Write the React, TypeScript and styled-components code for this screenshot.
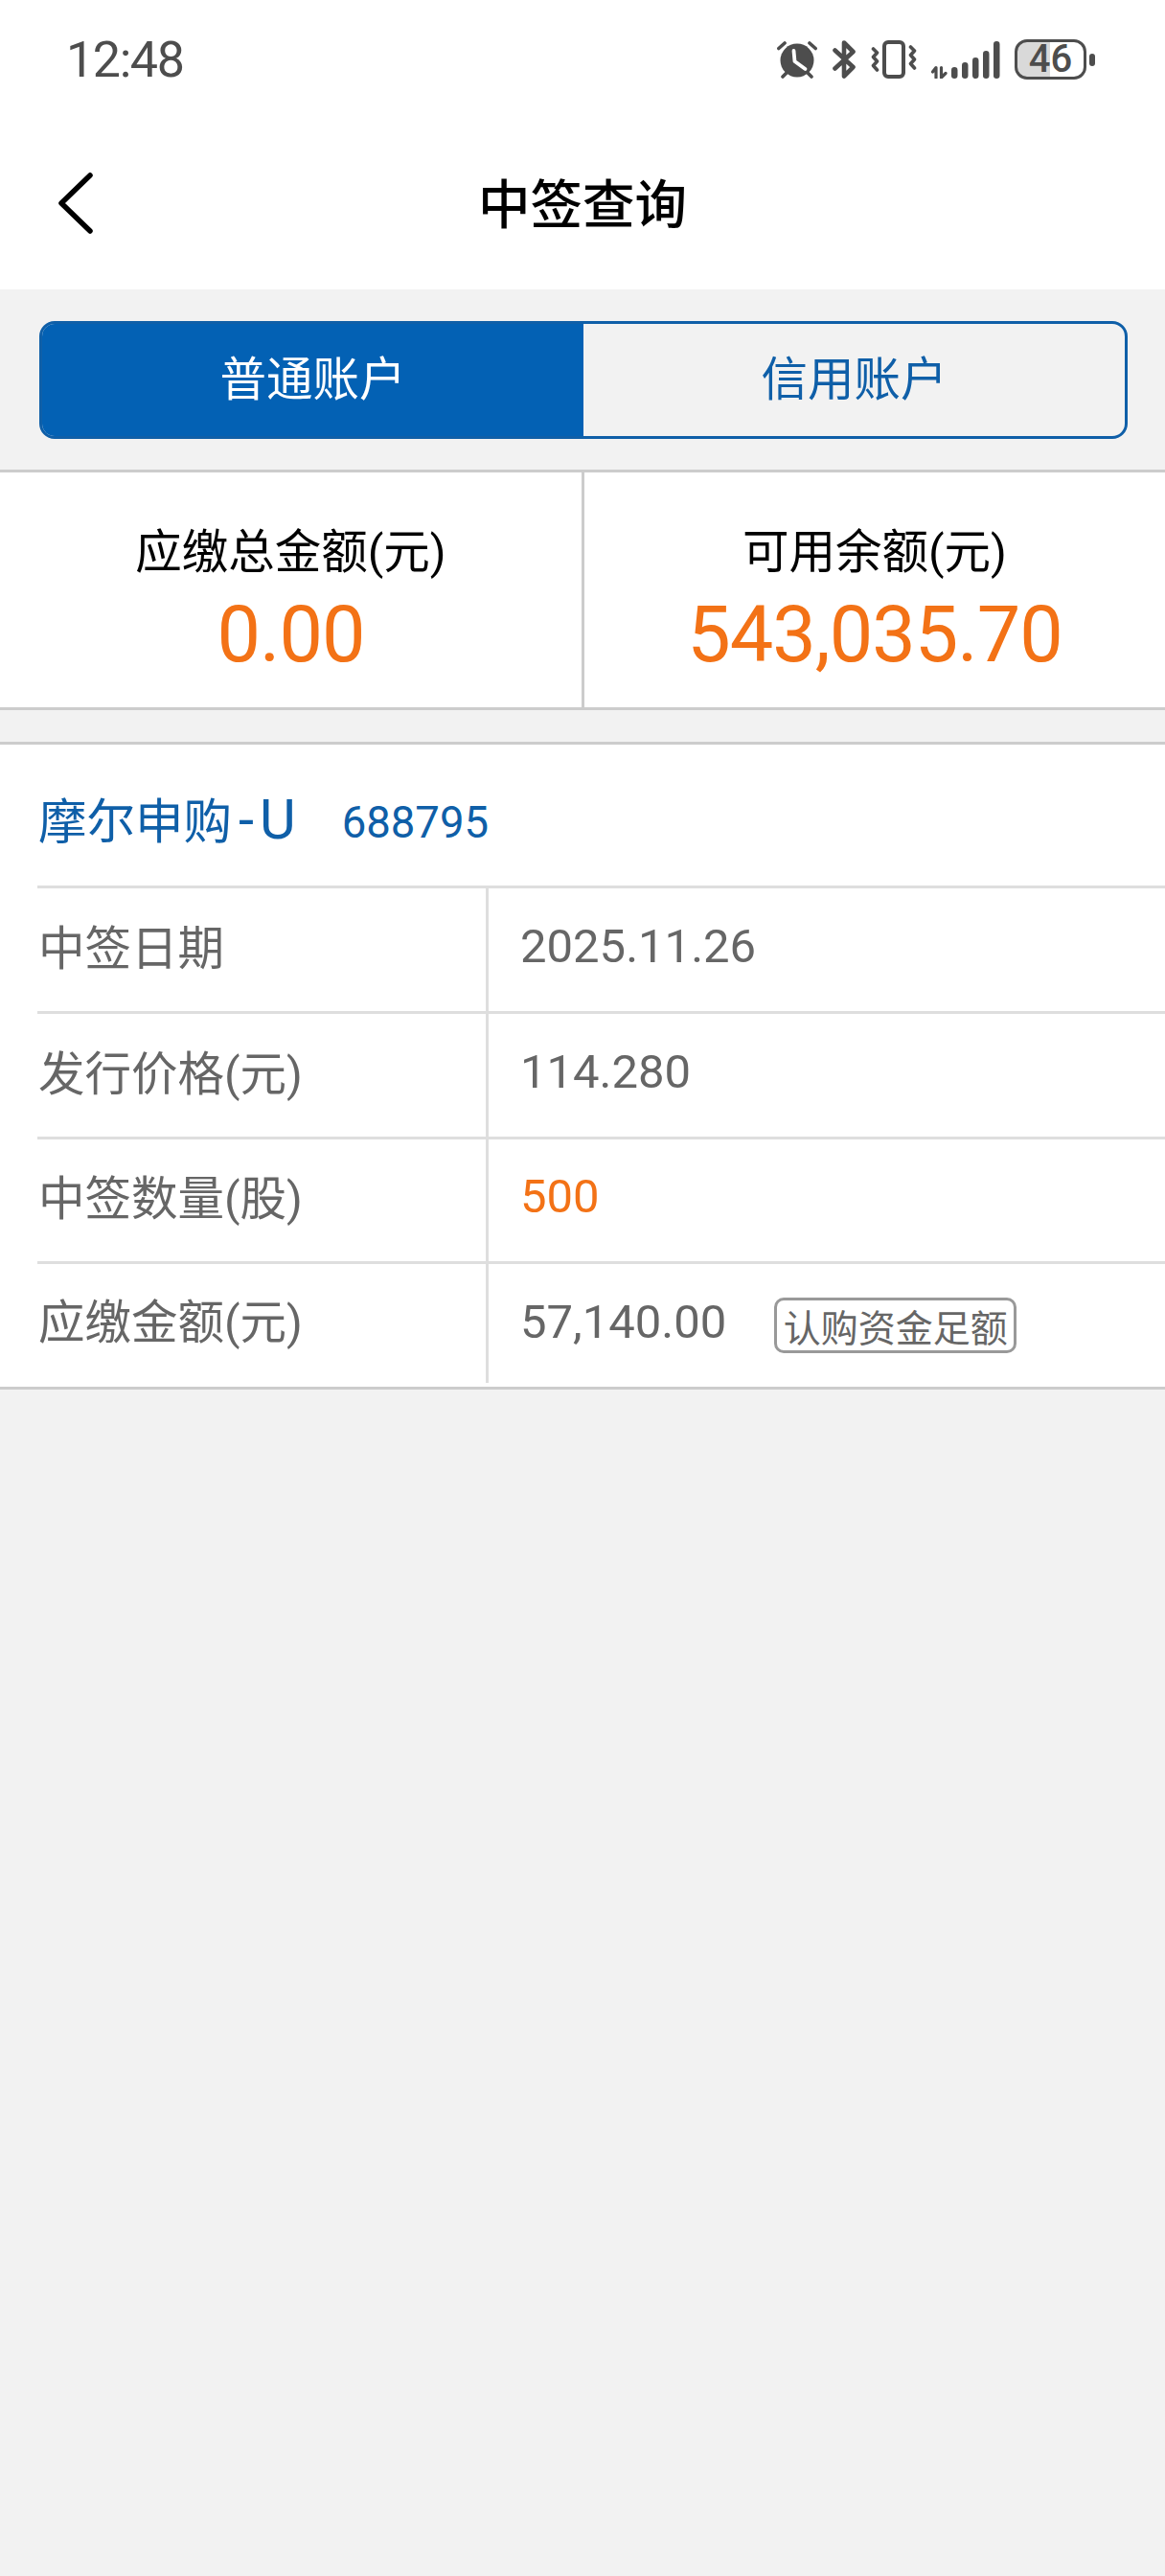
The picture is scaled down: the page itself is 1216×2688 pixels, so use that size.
import React from 'react';
import styled, { createGlobalStyle } from 'styled-components';

const GlobalStyle = createGlobalStyle`
  html, body {
    margin: 0;
    padding: 0;
    background: #f2f2f2;
  }
  * {
    box-sizing: border-box;
  }
`;

const blue = '#0f5fa8';
const orange = '#f37216';

const Page = styled.div`
  width: 1216px;
  min-height: 2688px;
  background: #f2f2f2;
  font-family: Roboto, "Noto Sans CJK SC", sans-serif;
`;

const Top = styled.header`
  background: #fff;
  height: 302px;
`;

const StatusBar = styled.div`
  height: 122px;
  display: flex;
  align-items: center;
  justify-content: space-between;
  padding: 2px 73px 0 69px;
`;

const Clock = styled.span`
  font-size: 52px;
  letter-spacing: -1.4px;
  color: #4d4d4d;
`;

const StatusIcons = styled.div`
  display: flex;
  align-items: center;
`;

const Battery = styled.div`
  width: 75px;
  height: 42px;
  margin-left: 15px;
  border: 3.5px solid #4d4d4d;
  border-radius: 13px;
  background: linear-gradient(to right, #d9d9d9 0 50%, #fff 50%);
  display: flex;
  align-items: center;
  justify-content: center;
  font-size: 40px;
  font-weight: 500;
  line-height: 1;
  color: #4d4d4d;
`;

const BatteryNub = styled.div`
  width: 6px;
  height: 13px;
  margin-left: 3px;
  border-radius: 3px;
  background: #4d4d4d;
`;

const NavBar = styled.div`
  height: 180px;
  display: flex;
  align-items: center;
  justify-content: center;
  position: relative;
  padding-bottom: 6px;
`;

const BackButton = styled.svg`
  position: absolute;
  left: 60px;
  top: 58px;
`;

const Title = styled.h1`
  margin: 0;
  font-size: 54.5px;
  font-weight: 500;
  color: #000;
`;

const TabsWrap = styled.div`
  padding: 33px 39px 32px 41px;
`;

const Tabs = styled.div`
  height: 123px;
  display: grid;
  grid-template-columns: 565px 1fr;
  border: 3px solid #0f5fa8;
  border-radius: 16px;
  overflow: hidden;
`;

const Tab = styled.div<{ $active?: boolean }>`
  display: flex;
  align-items: center;
  justify-content: center;
  padding-bottom: 9px;
  font-size: 48.5px;
  background: ${p => (p.$active ? '#0361b4' : 'transparent')};
  color: ${p => (p.$active ? '#fff' : blue)};
`;

const Stats = styled.section`
  display: grid;
  grid-template-columns: 610px 1fr;
  height: 251px;
  background: #fff;
  border-top: 3px solid #ccc;
  border-bottom: 3px solid #ccc;
`;

const Stat = styled.div<{ $first?: boolean }>`
  display: flex;
  flex-direction: column;
  align-items: center;
  padding-top: 54px;
  border-right: ${p => (p.$first ? '3px solid #ccc' : 'none')};
`;

const StatLabel = styled.div`
  font-size: 48.5px;
  line-height: 60px;
  color: #000;
`;

const StatValue = styled.div`
  font-size: 81px;
  line-height: 106px;
  margin-top: 3px;
  letter-spacing: -1px;
  color: ${orange};
`;

const Card = styled.section`
  margin-top: 33px;
  background: #fff;
  border-top: 3px solid #ccc;
  border-bottom: 3px solid #ccc;
`;

const CardHead = styled.div`
  height: 147px;
  display: flex;
  align-items: center;
  padding: 4px 0 0 40px;
  color: ${blue};
`;

const StockName = styled.span`
  font-size: 50.5px;
`;

const StockSuffix = styled.span`
  font-size: 58px;
  letter-spacing: 6px;
  margin-left: 7px;
`;

const StockCode = styled.span`
  font-size: 45.5px;
  margin-left: 42px;
  padding-top: 11px;
`;

const Row = styled.div`
  margin-left: 39px;
  height: 130.75px;
  display: grid;
  grid-template-columns: 471px 1fr;
  border-top: 3px solid #dedede;
`;

const RowLabel = styled.div<{ $last?: boolean }>`
  display: flex;
  align-items: center;
  font-size: 48.5px;
  color: #666;
  padding: 0 0 10px 1px;
  border-right: 3px solid #dedede;
  margin-bottom: ${p => (p.$last ? '4px' : '0')};
`;

const RowValue = styled.div<{ $accent?: boolean }>`
  display: flex;
  align-items: center;
  padding: 0 0 7px 33px;
  font-size: 49px;
  color: ${p => (p.$accent ? orange : '#666')};
`;

const Badge = styled.span`
  margin: 6px 0 0 50px;
  width: 253px;
  height: 58px;
  display: flex;
  align-items: center;
  justify-content: center;
  border: 3px solid #999;
  border-radius: 10px;
  font-size: 39px;
  white-space: nowrap;
`;

function AlarmIcon() {
  return (
    <svg width="42" height="40" viewBox="0 0 42 40">
      <circle cx="21" cy="21" r="17.5" fill="#4d4d4d" />
      <path d="M1.8 8.5 L8 3 M40.2 8.5 L34 3 M6 38 L9.5 34.5 M36 38 L32.5 34.5" stroke="#4d4d4d" strokeWidth="3.6" strokeLinecap="round" />
      <path d="M17.5 11 L18.5 22 L29.5 30" fill="none" stroke="#fff" strokeWidth="3.8" strokeLinecap="round" strokeLinejoin="round" />
    </svg>
  );
}

function BluetoothIcon() {
  return (
    <svg width="24" height="40" viewBox="0 0 24 40" style={{ marginLeft: 16 }}>
      <path d="M2.5 10.5 L21.5 28 L12 37.5 L12 2.5 L21.5 12 L2.5 29.5" fill="none" stroke="#4d4d4d" strokeWidth="4.6" strokeLinecap="round" strokeLinejoin="round" />
    </svg>
  );
}

function VibrateIcon() {
  const zig = 'M2.5 9 L6.5 13 L2.5 17.5 L6.5 22 L2.5 26.5 L6.5 31';
  return (
    <svg width="48" height="40" viewBox="0 0 48 40" style={{ marginLeft: 16 }}>
      <rect x="14" y="2" width="20" height="36" rx="4" fill="none" stroke="#4d4d4d" strokeWidth="4" />
      <path d={zig} fill="none" stroke="#4d4d4d" strokeWidth="3.6" strokeLinecap="round" strokeLinejoin="round" />
      <path d={zig} transform="translate(39 -2)" fill="none" stroke="#4d4d4d" strokeWidth="3.6" strokeLinecap="round" strokeLinejoin="round" />
    </svg>
  );
}

function SignalIcon() {
  const bars = [
    { x: 22, h: 12 },
    { x: 33, h: 17 },
    { x: 44, h: 22 },
    { x: 55, h: 29 },
    { x: 66, h: 39 },
  ];
  return (
    <svg width="72" height="40" viewBox="0 0 72 40" style={{ marginLeft: 15 }}>
      <path d="M5 39 V28.5 L1.5 33 M10.5 28.5 V39 L15 34.5" fill="none" stroke="#4d4d4d" strokeWidth="3.2" strokeLinecap="round" strokeLinejoin="round" />
      {bars.map(b => (
        <rect key={b.x} x={b.x - 1} y={40 - b.h} width="6.5" height={b.h} rx="3.2" fill="#4d4d4d" />
      ))}
    </svg>
  );
}

function App() {
  return (
    <Page>
      <GlobalStyle />
      <Top>
        <StatusBar>
          <Clock>12:48</Clock>
          <StatusIcons>
            <AlarmIcon />
            <BluetoothIcon />
            <VibrateIcon />
            <SignalIcon />
            <Battery>46</Battery>
            <BatteryNub />
          </StatusIcons>
        </StatusBar>
        <NavBar>
          <BackButton width="38" height="64" viewBox="0 0 38 64">
            <path d="M34 3 L4 32 L34 61" fill="none" stroke="#000" strokeWidth="5.5" strokeLinecap="round" strokeLinejoin="round" />
          </BackButton>
          <Title>中签查询</Title>
        </NavBar>
      </Top>
      <TabsWrap>
        <Tabs>
          <Tab $active>普通账户</Tab>
          <Tab>信用账户</Tab>
        </Tabs>
      </TabsWrap>
      <Stats>
        <Stat $first>
          <StatLabel>应缴总金额(元)</StatLabel>
          <StatValue>0.00</StatValue>
        </Stat>
        <Stat>
          <StatLabel>可用余额(元)</StatLabel>
          <StatValue>543,035.70</StatValue>
        </Stat>
      </Stats>
      <Card>
        <CardHead>
          <StockName>
            摩尔申购<StockSuffix>-U</StockSuffix>
          </StockName>
          <StockCode>688795</StockCode>
        </CardHead>
        <Row>
          <RowLabel>中签日期</RowLabel>
          <RowValue>2025.11.26</RowValue>
        </Row>
        <Row>
          <RowLabel>发行价格(元)</RowLabel>
          <RowValue>114.280</RowValue>
        </Row>
        <Row>
          <RowLabel>中签数量(股)</RowLabel>
          <RowValue $accent>500</RowValue>
        </Row>
        <Row>
          <RowLabel $last>应缴金额(元)</RowLabel>
          <RowValue>
            57,140.00
            <Badge>认购资金足额</Badge>
          </RowValue>
        </Row>
      </Card>
    </Page>
  );
}

export default App;
